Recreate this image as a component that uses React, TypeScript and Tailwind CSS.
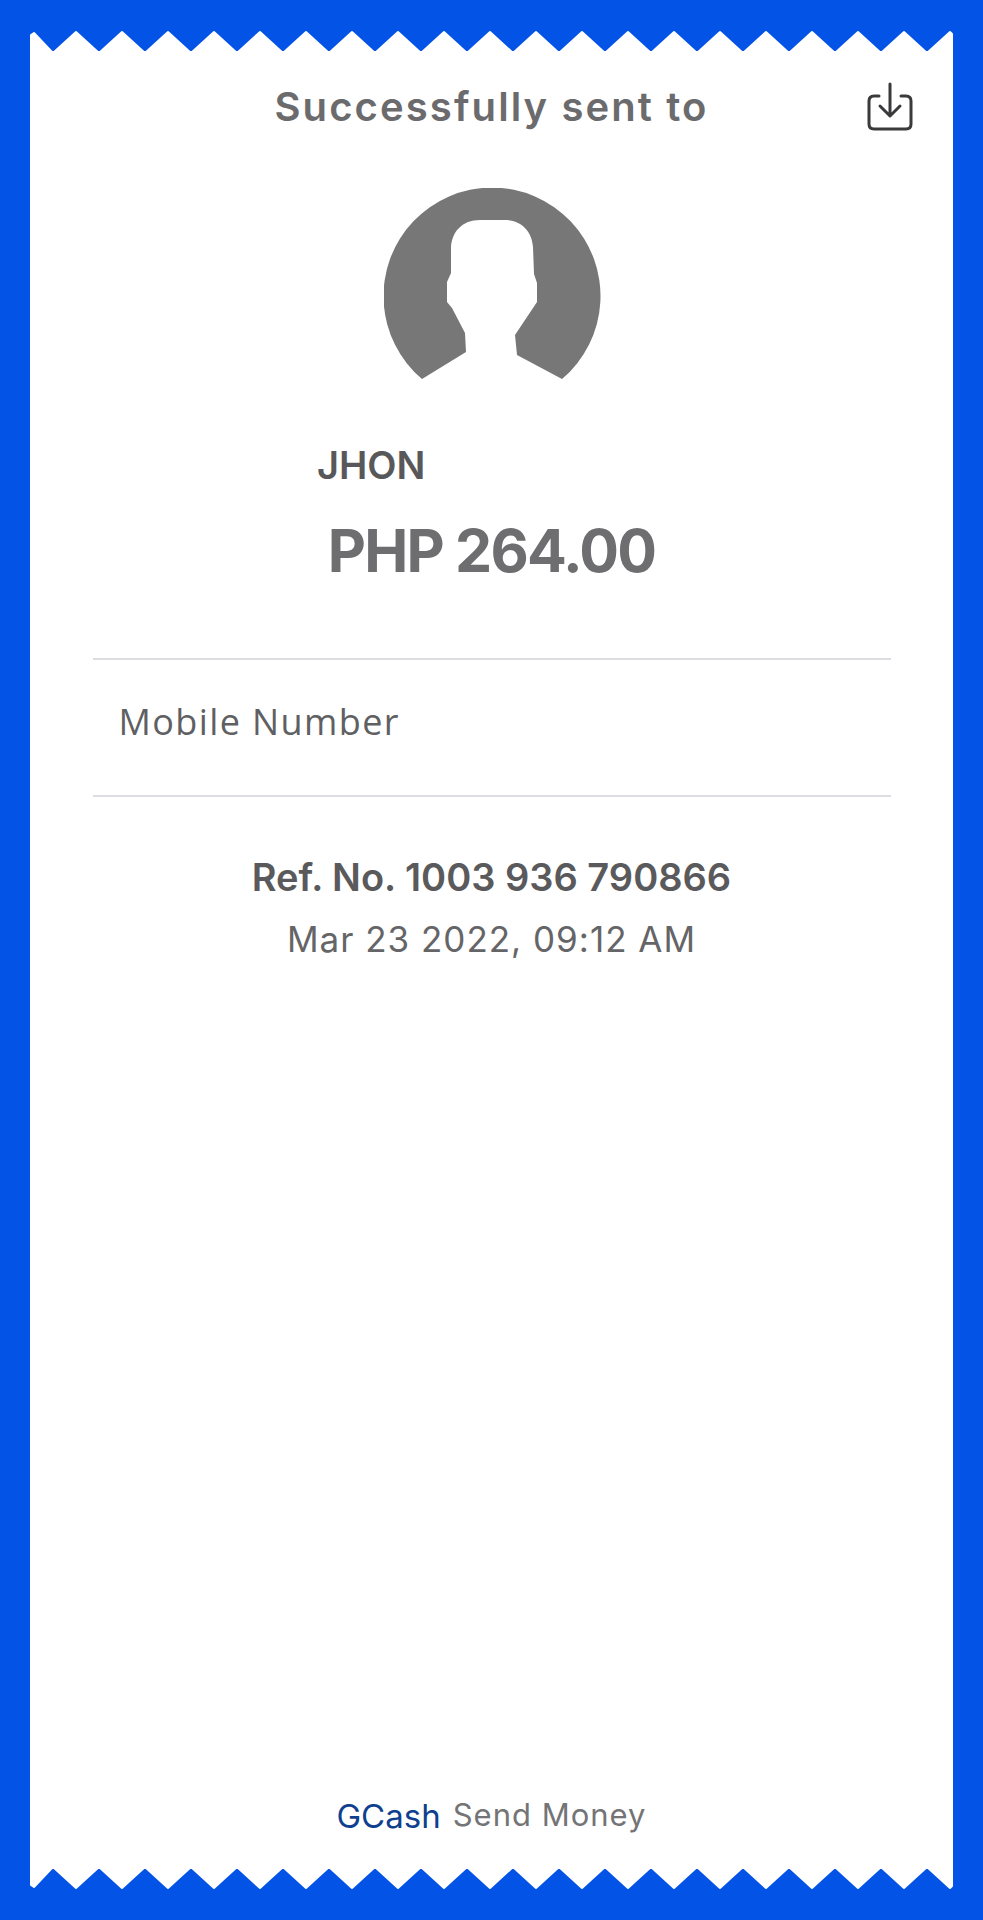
// sawtooth edge of the receipt, period 46px
const teeth = Array.from({ length: 20 }, (_, i) => `L${23 + i * 46} 23 L${46 + i * 46} 2`).join(" ")
const zigPath = `M1 24 L1 5 L4 3 ${teeth} L922 4 L922 24 Z`

function Zigzag({ flip }: { flip?: boolean }) {
  return (
    <svg width="923" height="21" viewBox="0 0 923 21" className={flip ? "block -scale-y-100" : "block"}>
      <path d={zigPath} fill="#ffffff" stroke="#ffffff" strokeWidth="2" strokeLinejoin="round" />
    </svg>
  )
}

function Avatar() {
  return (
    <svg width="218" height="192" viewBox="44 18 218 192" className="block ml-[3px]">
      <path
        d="M82 209 A108.5 108.5 0 1 1 222 209 L177 185 L175 165 L193 138 L197 132 L197 113 L194 104 L193 77 C192 60 180 50 165 50 L140 50 C122 50 112 62 111 77 L111 103 L107 112 L107 132 L112 138 L125 163 L126 182 Z"
        fill="#777777"
      />
    </svg>
  )
}

function SaveIcon() {
  return (
    <svg width="46" height="50" viewBox="0 0 46 50" fill="none" stroke="#3a3a3c" strokeWidth="3" strokeLinecap="round" strokeLinejoin="round" className="block">
      <path d="M12 14 H7 Q2 14 2 19 V42 Q2 47 7 47 H39 Q44 47 44 42 V19 Q44 14 39 14 H34" />
      <path d="M23 2 V33 M13 24 L23 34 L33 24" />
    </svg>
  )
}

export default function App() {
  return (
    <div className="h-[1920px] w-[983px] bg-[#0353e6] px-[30px] py-[30px] flex flex-col font-['Inter',sans-serif]">
      <Zigzag />
      <div className="flex-1 bg-white flex flex-col items-center relative">
        <div className="mt-[33px] text-[40px] leading-[46px] font-semibold tracking-[2.1px] text-[#6b6b6d]">
          Successfully sent to
        </div>
        <div className="absolute right-[40px] top-[31px]">
          <SaveIcon />
        </div>
        <div className="mt-[58px]">
          <Avatar />
        </div>
        <div className="mt-[63px] w-full pl-[287px] text-[38px] leading-[44px] font-semibold text-[#58585a]">JHON</div>
        <div className="mt-[30px] text-[59px] leading-[68px] font-bold tracking-[-1.8px] text-[#6e6e70]">PHP 264.00</div>
        <div className="mt-[73px] w-[798px] h-[139px] border-y-2 border-[#dcdde0] flex items-center pl-[26px] pb-[12px]">
          <span className="text-[36px] tracking-[1.4px] text-[#5f6062] font-['Open_Sans',sans-serif]">Mobile Number</span>
        </div>
        <div className="mt-[57px] text-[38px] leading-[46px] font-semibold text-[#5a5a5c]">Ref. No. 1003 936 790866</div>
        <div className="mt-[17px] text-[35px] leading-[44px] tracking-[1px] text-[#656567]">Mar 23 2022, 09:12 AM</div>
        <div className="mt-auto mb-[34px] flex items-baseline gap-[12px]">
          <span className="text-[33px] leading-[40px] translate-y-[2px] text-[#0f3f8f]">GCash</span>
          <span className="text-[31px] leading-[40px] tracking-[1px] text-[#747476]">Send Money</span>
        </div>
      </div>
      <Zigzag flip />
    </div>
  )
}
